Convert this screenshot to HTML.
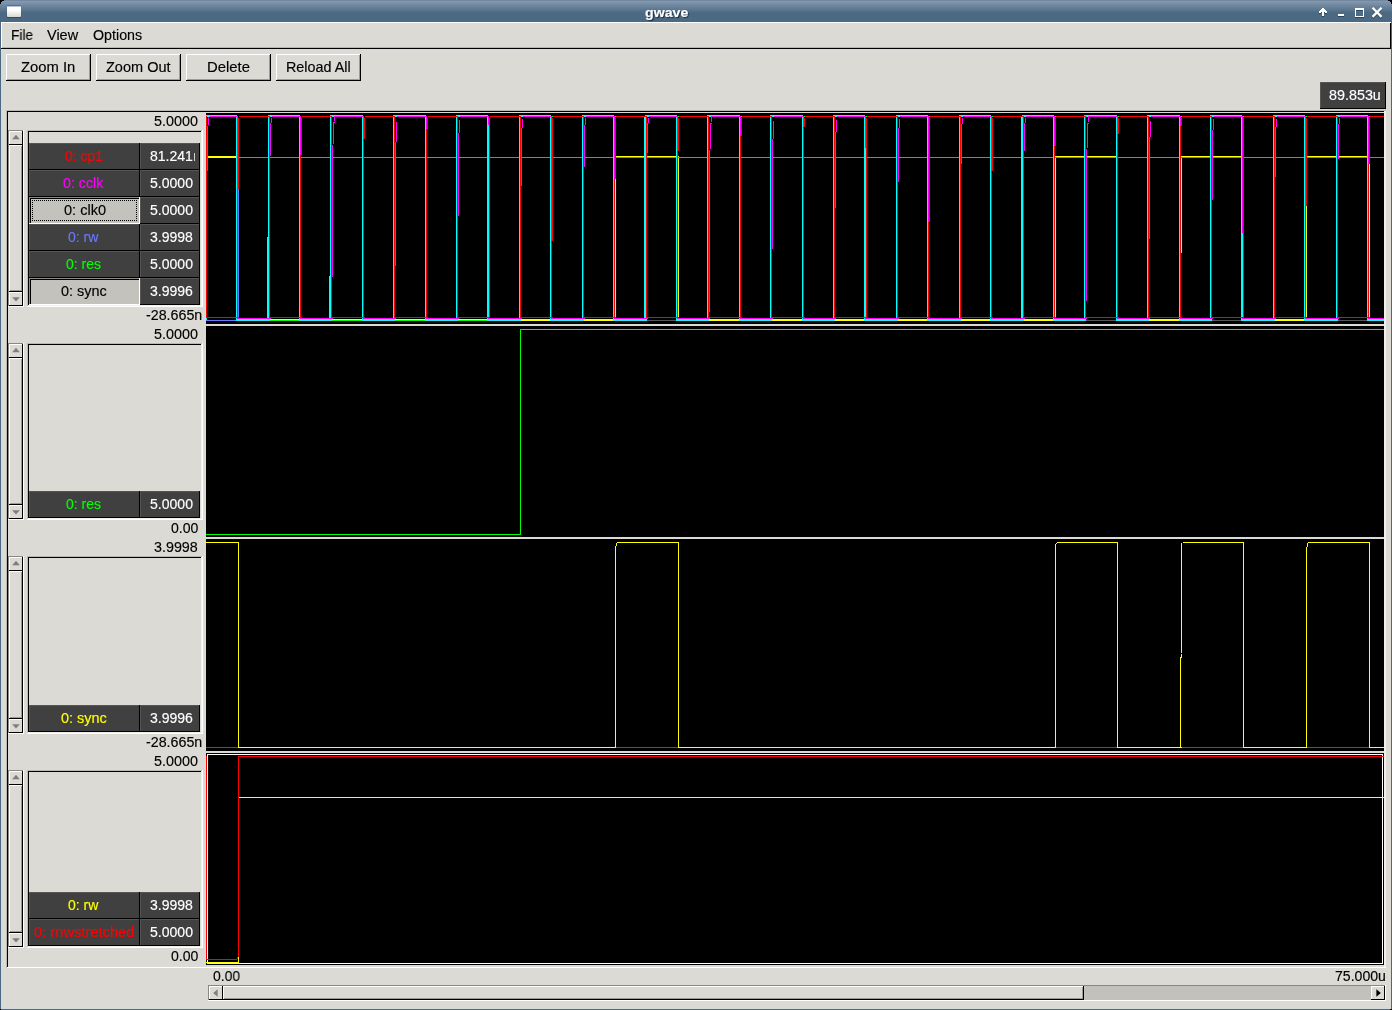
<!DOCTYPE html>
<html><head><meta charset="utf-8"><title>gwave</title>
<style>
html,body{margin:0;padding:0;}
body{width:1392px;height:1010px;background:#dcdad5;position:relative;overflow:hidden;font-family:"Liberation Sans",sans-serif;}
body>div,body>svg,body>span{position:absolute;}
.t{white-space:pre;line-height:16px;transform-origin:0 0;display:block;will-change:transform;-webkit-text-stroke:0.15px currentColor;}
</style></head><body>
<div style="left:0;top:0;width:1392px;height:22px;background:linear-gradient(#5d7690 0px,#869bb1 1px,#8096ad 2px,#4b6983 13px,#4b6983 22px);"></div>
<div style="left:0px;top:0px;width:4px;height:1px;background:#000;"></div>
<div style="left:0px;top:1px;width:2px;height:1px;background:#000;"></div>
<div style="left:0px;top:2px;width:1px;height:2px;background:#000;"></div>
<div style="left:1388px;top:0px;width:4px;height:1px;background:#000;"></div>
<div style="left:1390px;top:1px;width:2px;height:1px;background:#000;"></div>
<div style="left:1391px;top:2px;width:1px;height:2px;background:#000;"></div>
<div style="left:0px;top:22px;width:1px;height:988px;background:#4b6983;"></div>
<div style="left:1391px;top:22px;width:1px;height:988px;background:#4b6983;"></div>
<div style="left:0px;top:1009px;width:1392px;height:1px;background:#4b6983;"></div>
<div style="left:1390px;top:1009px;width:2px;height:1px;background:#000;"></div>
<div style="left:0px;top:1009px;width:1px;height:1px;background:#000;"></div>
<div style="left:7px;top:5px;width:14px;height:12px;background:linear-gradient(#3b62a8 0px,#5f82c0 1px,#fff 2px,#fff 5px,#d8d8d2 12px);border-radius:1px;box-shadow:0 1px 1px rgba(30,40,60,.5);"></div>
<div style="left:1px;top:22px;width:1390px;height:1px;background:#fff;"></div>
<div style="left:1px;top:22px;width:1px;height:26px;background:#fff;"></div>
<div style="left:1px;top:48px;width:1390px;height:1px;background:#000;"></div>
<div style="left:1390px;top:23px;width:1px;height:26px;background:#000;"></div>
<div style="left:2px;top:47px;width:1388px;height:1px;background:#b9b7b2;"></div>
<div style="left:6px;top:54px;width:85px;height:27px;background:#dcdad5;"></div>
<div style="left:6px;top:54px;width:84px;height:1px;background:#fff;"></div>
<div style="left:6px;top:54px;width:1px;height:26px;background:#fff;"></div>
<div style="left:6px;top:80px;width:85px;height:1px;background:#000;"></div>
<div style="left:90px;top:54px;width:1px;height:27px;background:#000;"></div>
<div style="left:7px;top:79px;width:83px;height:1px;background:#9d9b96;"></div>
<div style="left:89px;top:55px;width:1px;height:25px;background:#9d9b96;"></div>
<div style="left:96px;top:54px;width:85px;height:27px;background:#dcdad5;"></div>
<div style="left:96px;top:54px;width:84px;height:1px;background:#fff;"></div>
<div style="left:96px;top:54px;width:1px;height:26px;background:#fff;"></div>
<div style="left:96px;top:80px;width:85px;height:1px;background:#000;"></div>
<div style="left:180px;top:54px;width:1px;height:27px;background:#000;"></div>
<div style="left:97px;top:79px;width:83px;height:1px;background:#9d9b96;"></div>
<div style="left:179px;top:55px;width:1px;height:25px;background:#9d9b96;"></div>
<div style="left:186px;top:54px;width:85px;height:27px;background:#dcdad5;"></div>
<div style="left:186px;top:54px;width:84px;height:1px;background:#fff;"></div>
<div style="left:186px;top:54px;width:1px;height:26px;background:#fff;"></div>
<div style="left:186px;top:80px;width:85px;height:1px;background:#000;"></div>
<div style="left:270px;top:54px;width:1px;height:27px;background:#000;"></div>
<div style="left:187px;top:79px;width:83px;height:1px;background:#9d9b96;"></div>
<div style="left:269px;top:55px;width:1px;height:25px;background:#9d9b96;"></div>
<div style="left:276px;top:54px;width:85px;height:27px;background:#dcdad5;"></div>
<div style="left:276px;top:54px;width:84px;height:1px;background:#fff;"></div>
<div style="left:276px;top:54px;width:1px;height:26px;background:#fff;"></div>
<div style="left:276px;top:80px;width:85px;height:1px;background:#000;"></div>
<div style="left:360px;top:54px;width:1px;height:27px;background:#000;"></div>
<div style="left:277px;top:79px;width:83px;height:1px;background:#9d9b96;"></div>
<div style="left:359px;top:55px;width:1px;height:25px;background:#9d9b96;"></div>
<div style="left:1320px;top:82px;width:66px;height:27px;background:#404040;"></div>
<div style="left:1320px;top:108px;width:66px;height:1px;background:#000;"></div>
<div style="left:1385px;top:82px;width:1px;height:27px;background:#000;"></div>
<div style="left:1320px;top:82px;width:65px;height:1px;background:#555555;"></div>
<div style="left:1320px;top:82px;width:1px;height:26px;background:#555555;"></div>
<div style="left:6px;top:110px;width:1380px;height:1px;background:#bab8b3;"></div>
<div style="left:6px;top:110px;width:1px;height:858px;background:#bab8b3;"></div>
<div style="left:7px;top:111px;width:1377px;height:1px;background:#000;"></div>
<div style="left:7px;top:111px;width:1px;height:856px;background:#000;"></div>
<div style="left:1384px;top:111px;width:2px;height:857px;background:#f1efeb;"></div>
<div style="left:7px;top:967px;width:1379px;height:1px;background:#fff;"></div>
<div style="left:206px;top:113px;width:1178px;height:211px;background:#000;"></div>
<div style="left:206px;top:326px;width:1178px;height:211px;background:#000;"></div>
<div style="left:206px;top:539px;width:1178px;height:212px;background:#000;"></div>
<div style="left:206px;top:753px;width:1178px;height:212px;background:#000;"></div>
<div style="left:8px;top:130px;width:16px;height:177px;background:#dcdad5;"></div>
<div style="left:8px;top:130px;width:15px;height:1px;background:#8a8883;"></div>
<div style="left:8px;top:130px;width:1px;height:176px;background:#8a8883;"></div>
<div style="left:8px;top:306px;width:16px;height:1px;background:#fff;"></div>
<div style="left:23px;top:130px;width:1px;height:177px;background:#fff;"></div>
<div style="left:9px;top:131px;width:14px;height:14px;background:#dcdad5;"></div>
<div style="left:9px;top:131px;width:14px;height:1px;background:#fff;"></div>
<div style="left:9px;top:131px;width:1px;height:14px;background:#fff;"></div>
<div style="left:9px;top:144px;width:14px;height:1px;background:#000;"></div>
<div style="left:22px;top:131px;width:1px;height:14px;background:#000;"></div>
<svg style="left:9px;top:131px" width="14" height="14"><polygon points="3.2,8.2 10.8,8.2 7,3.8" fill="#807e7a"/></svg>
<div style="left:9px;top:145px;width:14px;height:147px;background:#dcdad5;"></div>
<div style="left:9px;top:145px;width:14px;height:1px;background:#fff;"></div>
<div style="left:9px;top:145px;width:1px;height:147px;background:#fff;"></div>
<div style="left:10px;top:290px;width:12px;height:1px;background:#9d9b96;"></div>
<div style="left:21px;top:146px;width:1px;height:145px;background:#9d9b96;"></div>
<div style="left:9px;top:291px;width:14px;height:1px;background:#000;"></div>
<div style="left:22px;top:145px;width:1px;height:147px;background:#000;"></div>
<div style="left:9px;top:292px;width:14px;height:14px;background:#dcdad5;"></div>
<div style="left:9px;top:292px;width:14px;height:1px;background:#fff;"></div>
<div style="left:9px;top:292px;width:1px;height:14px;background:#fff;"></div>
<div style="left:9px;top:305px;width:14px;height:1px;background:#000;"></div>
<div style="left:22px;top:292px;width:1px;height:14px;background:#000;"></div>
<svg style="left:9px;top:292px" width="14" height="14"><polygon points="3.2,5.2 10.8,5.2 7,9.6" fill="#807e7a"/></svg>
<div style="left:27px;top:130px;width:175px;height:1px;background:#bab8b3;"></div>
<div style="left:27px;top:130px;width:1px;height:176px;background:#bab8b3;"></div>
<div style="left:28px;top:131px;width:173px;height:1px;background:#000;"></div>
<div style="left:28px;top:131px;width:1px;height:174px;background:#000;"></div>
<div style="left:28px;top:305px;width:174px;height:1px;background:#f1efeb;"></div>
<div style="left:201px;top:131px;width:1px;height:175px;background:#f1efeb;"></div>
<div style="left:27px;top:306px;width:176px;height:1px;background:#fff;"></div>
<div style="left:202px;top:130px;width:1px;height:177px;background:#fff;"></div>
<div style="left:29px;top:143px;width:111px;height:27px;background:#404040;"></div>
<div style="left:29px;top:143px;width:110px;height:1px;background:#555555;"></div>
<div style="left:29px;top:143px;width:1px;height:26px;background:#555555;"></div>
<div style="left:29px;top:169px;width:111px;height:1px;background:#000;"></div>
<div style="left:139px;top:143px;width:1px;height:27px;background:#000;"></div>
<div style="left:140px;top:143px;width:60px;height:27px;background:#404040;"></div>
<div style="left:140px;top:143px;width:59px;height:1px;background:#555555;"></div>
<div style="left:140px;top:143px;width:1px;height:26px;background:#555555;"></div>
<div style="left:140px;top:169px;width:60px;height:1px;background:#000;"></div>
<div style="left:199px;top:143px;width:1px;height:27px;background:#000;"></div>
<div style="left:194px;top:153px;width:1px;height:8px;background:#d0d0d0;"></div>
<div style="left:29px;top:170px;width:111px;height:27px;background:#404040;"></div>
<div style="left:29px;top:170px;width:110px;height:1px;background:#555555;"></div>
<div style="left:29px;top:170px;width:1px;height:26px;background:#555555;"></div>
<div style="left:29px;top:196px;width:111px;height:1px;background:#000;"></div>
<div style="left:139px;top:170px;width:1px;height:27px;background:#000;"></div>
<div style="left:140px;top:170px;width:60px;height:27px;background:#404040;"></div>
<div style="left:140px;top:170px;width:59px;height:1px;background:#555555;"></div>
<div style="left:140px;top:170px;width:1px;height:26px;background:#555555;"></div>
<div style="left:140px;top:196px;width:60px;height:1px;background:#000;"></div>
<div style="left:199px;top:170px;width:1px;height:27px;background:#000;"></div>
<div style="left:29px;top:197px;width:111px;height:27px;background:#c4c2bc;"></div>
<div style="left:29px;top:197px;width:111px;height:1px;background:#8f8d88;"></div>
<div style="left:29px;top:197px;width:1px;height:27px;background:#8f8d88;"></div>
<div style="left:30px;top:198px;width:109px;height:1px;background:#000;"></div>
<div style="left:30px;top:198px;width:1px;height:25px;background:#000;"></div>
<div style="left:29px;top:223px;width:111px;height:1px;background:#fff;"></div>
<div style="left:139px;top:197px;width:1px;height:27px;background:#fff;"></div>
<div style="left:32px;top:200px;width:103px;height:19px;border:1px dotted #000;"></div>
<div style="left:140px;top:197px;width:60px;height:27px;background:#404040;"></div>
<div style="left:140px;top:197px;width:59px;height:1px;background:#555555;"></div>
<div style="left:140px;top:197px;width:1px;height:26px;background:#555555;"></div>
<div style="left:140px;top:223px;width:60px;height:1px;background:#000;"></div>
<div style="left:199px;top:197px;width:1px;height:27px;background:#000;"></div>
<div style="left:29px;top:224px;width:111px;height:27px;background:#404040;"></div>
<div style="left:29px;top:224px;width:110px;height:1px;background:#555555;"></div>
<div style="left:29px;top:224px;width:1px;height:26px;background:#555555;"></div>
<div style="left:29px;top:250px;width:111px;height:1px;background:#000;"></div>
<div style="left:139px;top:224px;width:1px;height:27px;background:#000;"></div>
<div style="left:140px;top:224px;width:60px;height:27px;background:#404040;"></div>
<div style="left:140px;top:224px;width:59px;height:1px;background:#555555;"></div>
<div style="left:140px;top:224px;width:1px;height:26px;background:#555555;"></div>
<div style="left:140px;top:250px;width:60px;height:1px;background:#000;"></div>
<div style="left:199px;top:224px;width:1px;height:27px;background:#000;"></div>
<div style="left:29px;top:251px;width:111px;height:27px;background:#404040;"></div>
<div style="left:29px;top:251px;width:110px;height:1px;background:#555555;"></div>
<div style="left:29px;top:251px;width:1px;height:26px;background:#555555;"></div>
<div style="left:29px;top:277px;width:111px;height:1px;background:#000;"></div>
<div style="left:139px;top:251px;width:1px;height:27px;background:#000;"></div>
<div style="left:140px;top:251px;width:60px;height:27px;background:#404040;"></div>
<div style="left:140px;top:251px;width:59px;height:1px;background:#555555;"></div>
<div style="left:140px;top:251px;width:1px;height:26px;background:#555555;"></div>
<div style="left:140px;top:277px;width:60px;height:1px;background:#000;"></div>
<div style="left:199px;top:251px;width:1px;height:27px;background:#000;"></div>
<div style="left:29px;top:278px;width:111px;height:27px;background:#c4c2bc;"></div>
<div style="left:29px;top:278px;width:111px;height:1px;background:#8f8d88;"></div>
<div style="left:29px;top:278px;width:1px;height:27px;background:#8f8d88;"></div>
<div style="left:30px;top:279px;width:109px;height:1px;background:#000;"></div>
<div style="left:30px;top:279px;width:1px;height:25px;background:#000;"></div>
<div style="left:29px;top:304px;width:111px;height:1px;background:#fff;"></div>
<div style="left:139px;top:278px;width:1px;height:27px;background:#fff;"></div>
<div style="left:140px;top:278px;width:60px;height:27px;background:#404040;"></div>
<div style="left:140px;top:278px;width:59px;height:1px;background:#555555;"></div>
<div style="left:140px;top:278px;width:1px;height:26px;background:#555555;"></div>
<div style="left:140px;top:304px;width:60px;height:1px;background:#000;"></div>
<div style="left:199px;top:278px;width:1px;height:27px;background:#000;"></div>
<div style="left:8px;top:343px;width:16px;height:177px;background:#dcdad5;"></div>
<div style="left:8px;top:343px;width:15px;height:1px;background:#8a8883;"></div>
<div style="left:8px;top:343px;width:1px;height:176px;background:#8a8883;"></div>
<div style="left:8px;top:519px;width:16px;height:1px;background:#fff;"></div>
<div style="left:23px;top:343px;width:1px;height:177px;background:#fff;"></div>
<div style="left:9px;top:344px;width:14px;height:14px;background:#dcdad5;"></div>
<div style="left:9px;top:344px;width:14px;height:1px;background:#fff;"></div>
<div style="left:9px;top:344px;width:1px;height:14px;background:#fff;"></div>
<div style="left:9px;top:357px;width:14px;height:1px;background:#000;"></div>
<div style="left:22px;top:344px;width:1px;height:14px;background:#000;"></div>
<svg style="left:9px;top:344px" width="14" height="14"><polygon points="3.2,8.2 10.8,8.2 7,3.8" fill="#807e7a"/></svg>
<div style="left:9px;top:358px;width:14px;height:147px;background:#dcdad5;"></div>
<div style="left:9px;top:358px;width:14px;height:1px;background:#fff;"></div>
<div style="left:9px;top:358px;width:1px;height:147px;background:#fff;"></div>
<div style="left:10px;top:503px;width:12px;height:1px;background:#9d9b96;"></div>
<div style="left:21px;top:359px;width:1px;height:145px;background:#9d9b96;"></div>
<div style="left:9px;top:504px;width:14px;height:1px;background:#000;"></div>
<div style="left:22px;top:358px;width:1px;height:147px;background:#000;"></div>
<div style="left:9px;top:505px;width:14px;height:14px;background:#dcdad5;"></div>
<div style="left:9px;top:505px;width:14px;height:1px;background:#fff;"></div>
<div style="left:9px;top:505px;width:1px;height:14px;background:#fff;"></div>
<div style="left:9px;top:518px;width:14px;height:1px;background:#000;"></div>
<div style="left:22px;top:505px;width:1px;height:14px;background:#000;"></div>
<svg style="left:9px;top:505px" width="14" height="14"><polygon points="3.2,5.2 10.8,5.2 7,9.6" fill="#807e7a"/></svg>
<div style="left:27px;top:343px;width:175px;height:1px;background:#bab8b3;"></div>
<div style="left:27px;top:343px;width:1px;height:176px;background:#bab8b3;"></div>
<div style="left:28px;top:344px;width:173px;height:1px;background:#000;"></div>
<div style="left:28px;top:344px;width:1px;height:174px;background:#000;"></div>
<div style="left:28px;top:518px;width:174px;height:1px;background:#f1efeb;"></div>
<div style="left:201px;top:344px;width:1px;height:175px;background:#f1efeb;"></div>
<div style="left:27px;top:519px;width:176px;height:1px;background:#fff;"></div>
<div style="left:202px;top:343px;width:1px;height:177px;background:#fff;"></div>
<div style="left:29px;top:491px;width:111px;height:27px;background:#404040;"></div>
<div style="left:29px;top:491px;width:110px;height:1px;background:#555555;"></div>
<div style="left:29px;top:491px;width:1px;height:26px;background:#555555;"></div>
<div style="left:29px;top:517px;width:111px;height:1px;background:#000;"></div>
<div style="left:139px;top:491px;width:1px;height:27px;background:#000;"></div>
<div style="left:140px;top:491px;width:60px;height:27px;background:#404040;"></div>
<div style="left:140px;top:491px;width:59px;height:1px;background:#555555;"></div>
<div style="left:140px;top:491px;width:1px;height:26px;background:#555555;"></div>
<div style="left:140px;top:517px;width:60px;height:1px;background:#000;"></div>
<div style="left:199px;top:491px;width:1px;height:27px;background:#000;"></div>
<div style="left:8px;top:556px;width:16px;height:178px;background:#dcdad5;"></div>
<div style="left:8px;top:556px;width:15px;height:1px;background:#8a8883;"></div>
<div style="left:8px;top:556px;width:1px;height:177px;background:#8a8883;"></div>
<div style="left:8px;top:733px;width:16px;height:1px;background:#fff;"></div>
<div style="left:23px;top:556px;width:1px;height:178px;background:#fff;"></div>
<div style="left:9px;top:557px;width:14px;height:14px;background:#dcdad5;"></div>
<div style="left:9px;top:557px;width:14px;height:1px;background:#fff;"></div>
<div style="left:9px;top:557px;width:1px;height:14px;background:#fff;"></div>
<div style="left:9px;top:570px;width:14px;height:1px;background:#000;"></div>
<div style="left:22px;top:557px;width:1px;height:14px;background:#000;"></div>
<svg style="left:9px;top:557px" width="14" height="14"><polygon points="3.2,8.2 10.8,8.2 7,3.8" fill="#807e7a"/></svg>
<div style="left:9px;top:571px;width:14px;height:148px;background:#dcdad5;"></div>
<div style="left:9px;top:571px;width:14px;height:1px;background:#fff;"></div>
<div style="left:9px;top:571px;width:1px;height:148px;background:#fff;"></div>
<div style="left:10px;top:717px;width:12px;height:1px;background:#9d9b96;"></div>
<div style="left:21px;top:572px;width:1px;height:146px;background:#9d9b96;"></div>
<div style="left:9px;top:718px;width:14px;height:1px;background:#000;"></div>
<div style="left:22px;top:571px;width:1px;height:148px;background:#000;"></div>
<div style="left:9px;top:719px;width:14px;height:14px;background:#dcdad5;"></div>
<div style="left:9px;top:719px;width:14px;height:1px;background:#fff;"></div>
<div style="left:9px;top:719px;width:1px;height:14px;background:#fff;"></div>
<div style="left:9px;top:732px;width:14px;height:1px;background:#000;"></div>
<div style="left:22px;top:719px;width:1px;height:14px;background:#000;"></div>
<svg style="left:9px;top:719px" width="14" height="14"><polygon points="3.2,5.2 10.8,5.2 7,9.6" fill="#807e7a"/></svg>
<div style="left:27px;top:556px;width:175px;height:1px;background:#bab8b3;"></div>
<div style="left:27px;top:556px;width:1px;height:177px;background:#bab8b3;"></div>
<div style="left:28px;top:557px;width:173px;height:1px;background:#000;"></div>
<div style="left:28px;top:557px;width:1px;height:175px;background:#000;"></div>
<div style="left:28px;top:732px;width:174px;height:1px;background:#f1efeb;"></div>
<div style="left:201px;top:557px;width:1px;height:176px;background:#f1efeb;"></div>
<div style="left:27px;top:733px;width:176px;height:1px;background:#fff;"></div>
<div style="left:202px;top:556px;width:1px;height:178px;background:#fff;"></div>
<div style="left:29px;top:705px;width:111px;height:27px;background:#404040;"></div>
<div style="left:29px;top:705px;width:110px;height:1px;background:#555555;"></div>
<div style="left:29px;top:705px;width:1px;height:26px;background:#555555;"></div>
<div style="left:29px;top:731px;width:111px;height:1px;background:#000;"></div>
<div style="left:139px;top:705px;width:1px;height:27px;background:#000;"></div>
<div style="left:140px;top:705px;width:60px;height:27px;background:#404040;"></div>
<div style="left:140px;top:705px;width:59px;height:1px;background:#555555;"></div>
<div style="left:140px;top:705px;width:1px;height:26px;background:#555555;"></div>
<div style="left:140px;top:731px;width:60px;height:1px;background:#000;"></div>
<div style="left:199px;top:705px;width:1px;height:27px;background:#000;"></div>
<div style="left:8px;top:770px;width:16px;height:178px;background:#dcdad5;"></div>
<div style="left:8px;top:770px;width:15px;height:1px;background:#8a8883;"></div>
<div style="left:8px;top:770px;width:1px;height:177px;background:#8a8883;"></div>
<div style="left:8px;top:947px;width:16px;height:1px;background:#fff;"></div>
<div style="left:23px;top:770px;width:1px;height:178px;background:#fff;"></div>
<div style="left:9px;top:771px;width:14px;height:14px;background:#dcdad5;"></div>
<div style="left:9px;top:771px;width:14px;height:1px;background:#fff;"></div>
<div style="left:9px;top:771px;width:1px;height:14px;background:#fff;"></div>
<div style="left:9px;top:784px;width:14px;height:1px;background:#000;"></div>
<div style="left:22px;top:771px;width:1px;height:14px;background:#000;"></div>
<svg style="left:9px;top:771px" width="14" height="14"><polygon points="3.2,8.2 10.8,8.2 7,3.8" fill="#807e7a"/></svg>
<div style="left:9px;top:785px;width:14px;height:148px;background:#dcdad5;"></div>
<div style="left:9px;top:785px;width:14px;height:1px;background:#fff;"></div>
<div style="left:9px;top:785px;width:1px;height:148px;background:#fff;"></div>
<div style="left:10px;top:931px;width:12px;height:1px;background:#9d9b96;"></div>
<div style="left:21px;top:786px;width:1px;height:146px;background:#9d9b96;"></div>
<div style="left:9px;top:932px;width:14px;height:1px;background:#000;"></div>
<div style="left:22px;top:785px;width:1px;height:148px;background:#000;"></div>
<div style="left:9px;top:933px;width:14px;height:14px;background:#dcdad5;"></div>
<div style="left:9px;top:933px;width:14px;height:1px;background:#fff;"></div>
<div style="left:9px;top:933px;width:1px;height:14px;background:#fff;"></div>
<div style="left:9px;top:946px;width:14px;height:1px;background:#000;"></div>
<div style="left:22px;top:933px;width:1px;height:14px;background:#000;"></div>
<svg style="left:9px;top:933px" width="14" height="14"><polygon points="3.2,5.2 10.8,5.2 7,9.6" fill="#807e7a"/></svg>
<div style="left:27px;top:770px;width:175px;height:1px;background:#bab8b3;"></div>
<div style="left:27px;top:770px;width:1px;height:177px;background:#bab8b3;"></div>
<div style="left:28px;top:771px;width:173px;height:1px;background:#000;"></div>
<div style="left:28px;top:771px;width:1px;height:175px;background:#000;"></div>
<div style="left:28px;top:946px;width:174px;height:1px;background:#f1efeb;"></div>
<div style="left:201px;top:771px;width:1px;height:176px;background:#f1efeb;"></div>
<div style="left:27px;top:947px;width:176px;height:1px;background:#fff;"></div>
<div style="left:202px;top:770px;width:1px;height:178px;background:#fff;"></div>
<div style="left:29px;top:892px;width:111px;height:27px;background:#404040;"></div>
<div style="left:29px;top:892px;width:110px;height:1px;background:#555555;"></div>
<div style="left:29px;top:892px;width:1px;height:26px;background:#555555;"></div>
<div style="left:29px;top:918px;width:111px;height:1px;background:#000;"></div>
<div style="left:139px;top:892px;width:1px;height:27px;background:#000;"></div>
<div style="left:140px;top:892px;width:60px;height:27px;background:#404040;"></div>
<div style="left:140px;top:892px;width:59px;height:1px;background:#555555;"></div>
<div style="left:140px;top:892px;width:1px;height:26px;background:#555555;"></div>
<div style="left:140px;top:918px;width:60px;height:1px;background:#000;"></div>
<div style="left:199px;top:892px;width:1px;height:27px;background:#000;"></div>
<div style="left:29px;top:919px;width:111px;height:27px;background:#404040;"></div>
<div style="left:29px;top:919px;width:110px;height:1px;background:#555555;"></div>
<div style="left:29px;top:919px;width:1px;height:26px;background:#555555;"></div>
<div style="left:29px;top:945px;width:111px;height:1px;background:#000;"></div>
<div style="left:139px;top:919px;width:1px;height:27px;background:#000;"></div>
<div style="left:140px;top:919px;width:60px;height:27px;background:#404040;"></div>
<div style="left:140px;top:919px;width:59px;height:1px;background:#555555;"></div>
<div style="left:140px;top:919px;width:1px;height:26px;background:#555555;"></div>
<div style="left:140px;top:945px;width:60px;height:1px;background:#000;"></div>
<div style="left:199px;top:919px;width:1px;height:27px;background:#000;"></div>
<div style="left:208px;top:985px;width:1178px;height:16px;background:#c3c1bb;"></div>
<div style="left:208px;top:985px;width:1177px;height:1px;background:#8a8883;"></div>
<div style="left:208px;top:985px;width:1px;height:15px;background:#8a8883;"></div>
<div style="left:208px;top:1000px;width:1178px;height:1px;background:#fff;"></div>
<div style="left:1385px;top:985px;width:1px;height:16px;background:#fff;"></div>
<div style="left:209px;top:986px;width:14px;height:14px;background:#dcdad5;"></div>
<div style="left:209px;top:986px;width:14px;height:1px;background:#fff;"></div>
<div style="left:209px;top:986px;width:1px;height:14px;background:#fff;"></div>
<div style="left:209px;top:999px;width:14px;height:1px;background:#000;"></div>
<div style="left:222px;top:986px;width:1px;height:14px;background:#000;"></div>
<svg style="left:209px;top:986px" width="14" height="14"><polygon points="8.6,3.2 8.6,10.8 4.2,7" fill="#807e7a"/></svg>
<div style="left:223px;top:986px;width:861px;height:14px;background:#dcdad5;"></div>
<div style="left:223px;top:986px;width:861px;height:1px;background:#fff;"></div>
<div style="left:223px;top:986px;width:1px;height:14px;background:#fff;"></div>
<div style="left:224px;top:998px;width:859px;height:1px;background:#9d9b96;"></div>
<div style="left:1082px;top:987px;width:1px;height:12px;background:#9d9b96;"></div>
<div style="left:223px;top:999px;width:861px;height:1px;background:#000;"></div>
<div style="left:1083px;top:986px;width:1px;height:14px;background:#000;"></div>
<div style="left:1371px;top:986px;width:14px;height:14px;background:#dcdad5;"></div>
<div style="left:1371px;top:986px;width:14px;height:1px;background:#fff;"></div>
<div style="left:1371px;top:986px;width:1px;height:14px;background:#fff;"></div>
<div style="left:1371px;top:999px;width:14px;height:1px;background:#000;"></div>
<div style="left:1384px;top:986px;width:1px;height:14px;background:#000;"></div>
<svg style="left:1371px;top:986px" width="14" height="14"><polygon points="5.4,3.2 5.4,10.8 9.8,7" fill="#000"/></svg>
<svg style="left:0;top:0" width="1392" height="1010" shape-rendering="crispEdges">
<rect x="206" y="320" width="1178" height="1" fill="#555555"/>
<rect x="206" y="156" width="32" height="2" fill="#ffff00"/>
<rect x="238" y="319" width="377" height="2" fill="#ffff00"/>
<rect x="615" y="156" width="63" height="2" fill="#ffff00"/>
<rect x="678" y="319" width="377" height="2" fill="#ffff00"/>
<rect x="1055" y="156" width="62" height="2" fill="#ffff00"/>
<rect x="1117" y="319" width="64" height="2" fill="#ffff00"/>
<rect x="1181" y="156" width="62" height="2" fill="#ffff00"/>
<rect x="1243" y="319" width="63" height="2" fill="#ffff00"/>
<rect x="1306" y="156" width="63" height="2" fill="#ffff00"/>
<rect x="1369" y="319" width="15" height="2" fill="#ffff00"/>
<rect x="237" y="156" width="2" height="165" fill="#ffff00"/>
<rect x="614" y="156" width="2" height="165" fill="#ffff00"/>
<rect x="677" y="156" width="2" height="165" fill="#ffff00"/>
<rect x="1054" y="156" width="2" height="165" fill="#ffff00"/>
<rect x="1116" y="156" width="2" height="165" fill="#ffff00"/>
<rect x="1180" y="156" width="2" height="97" fill="#ffff00"/>
<rect x="1242" y="156" width="2" height="165" fill="#ffff00"/>
<rect x="1305" y="156" width="2" height="165" fill="#ffff00"/>
<rect x="1368" y="156" width="2" height="165" fill="#ffff00"/>
<rect x="206" y="320" width="314" height="1" fill="#00ff00"/>
<rect x="520" y="116" width="1" height="205" fill="#00ff00"/>
<rect x="520" y="116" width="864" height="1" fill="#00ff00"/>
<rect x="206" y="320" width="32" height="1" fill="#6678ff"/>
<rect x="238" y="157" width="1" height="164" fill="#6678ff"/>
<rect x="238" y="157" width="1146" height="1" fill="#6678ff"/>
<rect x="206" y="115" width="31" height="2" fill="#00ffff"/>
<rect x="236" y="319" width="33" height="2" fill="#00ffff"/>
<rect x="236" y="115" width="1" height="206" fill="#00ffff"/>
<rect x="237" y="116" width="1" height="205" fill="#00ffff"/>
<rect x="268" y="115" width="32" height="2" fill="#00ffff"/>
<rect x="268" y="115" width="1" height="206" fill="#00ffff"/>
<rect x="269" y="116" width="1" height="205" fill="#00ffff"/>
<rect x="267" y="237" width="1" height="84" fill="#00ffff"/>
<rect x="299" y="319" width="32" height="2" fill="#00ffff"/>
<rect x="299" y="115" width="1" height="206" fill="#00ffff"/>
<rect x="300" y="116" width="1" height="205" fill="#00ffff"/>
<rect x="330" y="115" width="33" height="2" fill="#00ffff"/>
<rect x="330" y="115" width="1" height="206" fill="#00ffff"/>
<rect x="331" y="116" width="1" height="205" fill="#00ffff"/>
<rect x="329" y="276" width="1" height="45" fill="#00ffff"/>
<rect x="362" y="319" width="32" height="2" fill="#00ffff"/>
<rect x="362" y="115" width="1" height="206" fill="#00ffff"/>
<rect x="363" y="116" width="1" height="205" fill="#00ffff"/>
<rect x="393" y="115" width="33" height="2" fill="#00ffff"/>
<rect x="393" y="115" width="1" height="206" fill="#00ffff"/>
<rect x="394" y="116" width="1" height="205" fill="#00ffff"/>
<rect x="425" y="319" width="32" height="2" fill="#00ffff"/>
<rect x="425" y="115" width="1" height="206" fill="#00ffff"/>
<rect x="426" y="116" width="1" height="205" fill="#00ffff"/>
<rect x="456" y="115" width="32" height="2" fill="#00ffff"/>
<rect x="456" y="115" width="1" height="206" fill="#00ffff"/>
<rect x="457" y="116" width="1" height="205" fill="#00ffff"/>
<rect x="487" y="319" width="33" height="2" fill="#00ffff"/>
<rect x="487" y="115" width="1" height="206" fill="#00ffff"/>
<rect x="488" y="116" width="1" height="205" fill="#00ffff"/>
<rect x="519" y="115" width="32" height="2" fill="#00ffff"/>
<rect x="519" y="115" width="1" height="206" fill="#00ffff"/>
<rect x="520" y="116" width="1" height="205" fill="#00ffff"/>
<rect x="550" y="319" width="33" height="2" fill="#00ffff"/>
<rect x="550" y="115" width="1" height="206" fill="#00ffff"/>
<rect x="551" y="116" width="1" height="205" fill="#00ffff"/>
<rect x="582" y="115" width="32" height="2" fill="#00ffff"/>
<rect x="582" y="115" width="1" height="206" fill="#00ffff"/>
<rect x="583" y="116" width="1" height="205" fill="#00ffff"/>
<rect x="613" y="319" width="33" height="2" fill="#00ffff"/>
<rect x="613" y="115" width="1" height="206" fill="#00ffff"/>
<rect x="614" y="116" width="1" height="205" fill="#00ffff"/>
<rect x="645" y="115" width="32" height="2" fill="#00ffff"/>
<rect x="645" y="115" width="1" height="206" fill="#00ffff"/>
<rect x="646" y="116" width="1" height="205" fill="#00ffff"/>
<rect x="644" y="116" width="1" height="205" fill="#00ffff"/>
<rect x="676" y="319" width="32" height="2" fill="#00ffff"/>
<rect x="676" y="115" width="1" height="206" fill="#00ffff"/>
<rect x="677" y="116" width="1" height="205" fill="#00ffff"/>
<rect x="707" y="115" width="33" height="2" fill="#00ffff"/>
<rect x="707" y="115" width="1" height="206" fill="#00ffff"/>
<rect x="708" y="116" width="1" height="205" fill="#00ffff"/>
<rect x="739" y="319" width="32" height="2" fill="#00ffff"/>
<rect x="739" y="115" width="1" height="206" fill="#00ffff"/>
<rect x="740" y="116" width="1" height="205" fill="#00ffff"/>
<rect x="770" y="115" width="33" height="2" fill="#00ffff"/>
<rect x="770" y="115" width="1" height="206" fill="#00ffff"/>
<rect x="771" y="116" width="1" height="205" fill="#00ffff"/>
<rect x="802" y="319" width="32" height="2" fill="#00ffff"/>
<rect x="802" y="115" width="1" height="206" fill="#00ffff"/>
<rect x="803" y="116" width="1" height="205" fill="#00ffff"/>
<rect x="833" y="115" width="32" height="2" fill="#00ffff"/>
<rect x="833" y="115" width="1" height="206" fill="#00ffff"/>
<rect x="834" y="116" width="1" height="205" fill="#00ffff"/>
<rect x="864" y="319" width="33" height="2" fill="#00ffff"/>
<rect x="864" y="115" width="1" height="206" fill="#00ffff"/>
<rect x="865" y="116" width="1" height="205" fill="#00ffff"/>
<rect x="896" y="115" width="32" height="2" fill="#00ffff"/>
<rect x="896" y="115" width="1" height="206" fill="#00ffff"/>
<rect x="897" y="116" width="1" height="205" fill="#00ffff"/>
<rect x="927" y="319" width="33" height="2" fill="#00ffff"/>
<rect x="927" y="115" width="1" height="206" fill="#00ffff"/>
<rect x="928" y="116" width="1" height="205" fill="#00ffff"/>
<rect x="959" y="115" width="32" height="2" fill="#00ffff"/>
<rect x="959" y="115" width="1" height="206" fill="#00ffff"/>
<rect x="960" y="116" width="1" height="205" fill="#00ffff"/>
<rect x="990" y="319" width="33" height="2" fill="#00ffff"/>
<rect x="990" y="115" width="1" height="206" fill="#00ffff"/>
<rect x="991" y="116" width="1" height="205" fill="#00ffff"/>
<rect x="1022" y="115" width="32" height="2" fill="#00ffff"/>
<rect x="1022" y="115" width="1" height="206" fill="#00ffff"/>
<rect x="1023" y="116" width="1" height="205" fill="#00ffff"/>
<rect x="1021" y="116" width="1" height="205" fill="#00ffff"/>
<rect x="1053" y="319" width="32" height="2" fill="#00ffff"/>
<rect x="1053" y="115" width="1" height="206" fill="#00ffff"/>
<rect x="1054" y="116" width="1" height="205" fill="#00ffff"/>
<rect x="1084" y="115" width="33" height="2" fill="#00ffff"/>
<rect x="1084" y="115" width="1" height="206" fill="#00ffff"/>
<rect x="1085" y="116" width="1" height="205" fill="#00ffff"/>
<rect x="1116" y="319" width="32" height="2" fill="#00ffff"/>
<rect x="1116" y="115" width="1" height="206" fill="#00ffff"/>
<rect x="1117" y="116" width="1" height="205" fill="#00ffff"/>
<rect x="1147" y="115" width="33" height="2" fill="#00ffff"/>
<rect x="1147" y="115" width="1" height="206" fill="#00ffff"/>
<rect x="1148" y="116" width="1" height="205" fill="#00ffff"/>
<rect x="1179" y="319" width="32" height="2" fill="#00ffff"/>
<rect x="1179" y="115" width="1" height="206" fill="#00ffff"/>
<rect x="1180" y="116" width="1" height="205" fill="#00ffff"/>
<rect x="1210" y="115" width="32" height="2" fill="#00ffff"/>
<rect x="1210" y="115" width="1" height="206" fill="#00ffff"/>
<rect x="1211" y="116" width="1" height="205" fill="#00ffff"/>
<rect x="1241" y="319" width="33" height="2" fill="#00ffff"/>
<rect x="1241" y="115" width="1" height="206" fill="#00ffff"/>
<rect x="1242" y="116" width="1" height="205" fill="#00ffff"/>
<rect x="1273" y="115" width="32" height="2" fill="#00ffff"/>
<rect x="1273" y="115" width="1" height="206" fill="#00ffff"/>
<rect x="1274" y="116" width="1" height="205" fill="#00ffff"/>
<rect x="1304" y="319" width="33" height="2" fill="#00ffff"/>
<rect x="1304" y="115" width="1" height="206" fill="#00ffff"/>
<rect x="1305" y="116" width="1" height="205" fill="#00ffff"/>
<rect x="1336" y="115" width="32" height="2" fill="#00ffff"/>
<rect x="1336" y="115" width="1" height="206" fill="#00ffff"/>
<rect x="1337" y="116" width="1" height="205" fill="#00ffff"/>
<rect x="1367" y="319" width="17" height="2" fill="#00ffff"/>
<rect x="1367" y="115" width="1" height="206" fill="#00ffff"/>
<rect x="1368" y="116" width="1" height="205" fill="#00ffff"/>
<rect x="210" y="116" width="28" height="1" fill="#ff00ff"/>
<rect x="208" y="117" width="1" height="8" fill="#ff00ff"/>
<rect x="207" y="126" width="1" height="45" fill="#ff00ff"/>
<rect x="237" y="116" width="1" height="73" fill="#ff00ff"/>
<rect x="237" y="318" width="34" height="1" fill="#ff00ff"/>
<rect x="272" y="116" width="29" height="1" fill="#ff00ff"/>
<rect x="271" y="118" width="1" height="5" fill="#ff00ff"/>
<rect x="270" y="124" width="1" height="32" fill="#ff00ff"/>
<rect x="270" y="123" width="1" height="1" fill="#ff00ff"/>
<rect x="300" y="116" width="1" height="39" fill="#ff00ff"/>
<rect x="300" y="318" width="33" height="1" fill="#ff00ff"/>
<rect x="334" y="116" width="30" height="1" fill="#ff00ff"/>
<rect x="333" y="122" width="1" height="22" fill="#ff00ff"/>
<rect x="332" y="145" width="1" height="132" fill="#ff00ff"/>
<rect x="334" y="117" width="1" height="4" fill="#ff00ff"/>
<rect x="334" y="122" width="1" height="1" fill="#ff00ff"/>
<rect x="363" y="116" width="1" height="23" fill="#ff00ff"/>
<rect x="363" y="318" width="33" height="1" fill="#ff00ff"/>
<rect x="397" y="116" width="30" height="1" fill="#ff00ff"/>
<rect x="396" y="122" width="1" height="20" fill="#ff00ff"/>
<rect x="395" y="143" width="1" height="123" fill="#ff00ff"/>
<rect x="395" y="142" width="1" height="1" fill="#ff00ff"/>
<rect x="426" y="116" width="1" height="13" fill="#ff00ff"/>
<rect x="426" y="318" width="33" height="1" fill="#ff00ff"/>
<rect x="460" y="116" width="29" height="1" fill="#ff00ff"/>
<rect x="459" y="120" width="1" height="13" fill="#ff00ff"/>
<rect x="458" y="134" width="1" height="82" fill="#ff00ff"/>
<rect x="458" y="133" width="1" height="1" fill="#ff00ff"/>
<rect x="488" y="116" width="1" height="9" fill="#ff00ff"/>
<rect x="488" y="318" width="34" height="1" fill="#ff00ff"/>
<rect x="523" y="116" width="29" height="1" fill="#ff00ff"/>
<rect x="522" y="119" width="1" height="9" fill="#ff00ff"/>
<rect x="521" y="129" width="1" height="57" fill="#ff00ff"/>
<rect x="521" y="128" width="1" height="1" fill="#ff00ff"/>
<rect x="551" y="116" width="1" height="125" fill="#ff00ff"/>
<rect x="551" y="318" width="34" height="1" fill="#ff00ff"/>
<rect x="586" y="116" width="29" height="1" fill="#ff00ff"/>
<rect x="585" y="118" width="1" height="7" fill="#ff00ff"/>
<rect x="584" y="126" width="1" height="41" fill="#ff00ff"/>
<rect x="584" y="125" width="1" height="1" fill="#ff00ff"/>
<rect x="614" y="116" width="1" height="63" fill="#ff00ff"/>
<rect x="614" y="318" width="34" height="1" fill="#ff00ff"/>
<rect x="649" y="116" width="29" height="1" fill="#ff00ff"/>
<rect x="648" y="118" width="1" height="5" fill="#ff00ff"/>
<rect x="647" y="124" width="1" height="29" fill="#ff00ff"/>
<rect x="647" y="123" width="1" height="1" fill="#ff00ff"/>
<rect x="677" y="116" width="1" height="35" fill="#ff00ff"/>
<rect x="677" y="318" width="33" height="1" fill="#ff00ff"/>
<rect x="711" y="116" width="30" height="1" fill="#ff00ff"/>
<rect x="710" y="123" width="1" height="26" fill="#ff00ff"/>
<rect x="709" y="150" width="1" height="162" fill="#ff00ff"/>
<rect x="711" y="117" width="1" height="5" fill="#ff00ff"/>
<rect x="711" y="123" width="1" height="1" fill="#ff00ff"/>
<rect x="740" y="116" width="1" height="20" fill="#ff00ff"/>
<rect x="740" y="318" width="33" height="1" fill="#ff00ff"/>
<rect x="774" y="116" width="30" height="1" fill="#ff00ff"/>
<rect x="773" y="121" width="1" height="18" fill="#ff00ff"/>
<rect x="772" y="140" width="1" height="109" fill="#ff00ff"/>
<rect x="772" y="139" width="1" height="1" fill="#ff00ff"/>
<rect x="803" y="116" width="1" height="11" fill="#ff00ff"/>
<rect x="803" y="318" width="33" height="1" fill="#ff00ff"/>
<rect x="837" y="116" width="29" height="1" fill="#ff00ff"/>
<rect x="836" y="120" width="1" height="12" fill="#ff00ff"/>
<rect x="835" y="133" width="1" height="75" fill="#ff00ff"/>
<rect x="835" y="132" width="1" height="1" fill="#ff00ff"/>
<rect x="865" y="116" width="1" height="32" fill="#ff00ff"/>
<rect x="865" y="318" width="34" height="1" fill="#ff00ff"/>
<rect x="900" y="116" width="29" height="1" fill="#ff00ff"/>
<rect x="899" y="119" width="1" height="9" fill="#ff00ff"/>
<rect x="898" y="129" width="1" height="53" fill="#ff00ff"/>
<rect x="898" y="128" width="1" height="1" fill="#ff00ff"/>
<rect x="928" y="116" width="1" height="106" fill="#ff00ff"/>
<rect x="928" y="318" width="34" height="1" fill="#ff00ff"/>
<rect x="963" y="116" width="29" height="1" fill="#ff00ff"/>
<rect x="962" y="118" width="1" height="6" fill="#ff00ff"/>
<rect x="961" y="125" width="1" height="39" fill="#ff00ff"/>
<rect x="961" y="124" width="1" height="1" fill="#ff00ff"/>
<rect x="991" y="116" width="1" height="55" fill="#ff00ff"/>
<rect x="991" y="318" width="34" height="1" fill="#ff00ff"/>
<rect x="1026" y="116" width="29" height="1" fill="#ff00ff"/>
<rect x="1025" y="118" width="1" height="5" fill="#ff00ff"/>
<rect x="1024" y="124" width="1" height="27" fill="#ff00ff"/>
<rect x="1024" y="123" width="1" height="1" fill="#ff00ff"/>
<rect x="1054" y="116" width="1" height="30" fill="#ff00ff"/>
<rect x="1054" y="318" width="33" height="1" fill="#ff00ff"/>
<rect x="1088" y="116" width="30" height="1" fill="#ff00ff"/>
<rect x="1087" y="123" width="1" height="25" fill="#ff00ff"/>
<rect x="1086" y="149" width="1" height="152" fill="#ff00ff"/>
<rect x="1088" y="117" width="1" height="5" fill="#ff00ff"/>
<rect x="1088" y="123" width="1" height="1" fill="#ff00ff"/>
<rect x="1117" y="116" width="1" height="18" fill="#ff00ff"/>
<rect x="1117" y="318" width="33" height="1" fill="#ff00ff"/>
<rect x="1151" y="116" width="30" height="1" fill="#ff00ff"/>
<rect x="1150" y="121" width="1" height="16" fill="#ff00ff"/>
<rect x="1149" y="138" width="1" height="101" fill="#ff00ff"/>
<rect x="1149" y="137" width="1" height="1" fill="#ff00ff"/>
<rect x="1180" y="116" width="1" height="10" fill="#ff00ff"/>
<rect x="1180" y="318" width="33" height="1" fill="#ff00ff"/>
<rect x="1214" y="116" width="29" height="1" fill="#ff00ff"/>
<rect x="1213" y="119" width="1" height="11" fill="#ff00ff"/>
<rect x="1212" y="131" width="1" height="69" fill="#ff00ff"/>
<rect x="1212" y="130" width="1" height="1" fill="#ff00ff"/>
<rect x="1242" y="116" width="1" height="117" fill="#ff00ff"/>
<rect x="1242" y="318" width="34" height="1" fill="#ff00ff"/>
<rect x="1277" y="116" width="29" height="1" fill="#ff00ff"/>
<rect x="1276" y="119" width="1" height="8" fill="#ff00ff"/>
<rect x="1275" y="128" width="1" height="49" fill="#ff00ff"/>
<rect x="1275" y="127" width="1" height="1" fill="#ff00ff"/>
<rect x="1305" y="116" width="1" height="90" fill="#ff00ff"/>
<rect x="1305" y="318" width="34" height="1" fill="#ff00ff"/>
<rect x="1340" y="116" width="29" height="1" fill="#ff00ff"/>
<rect x="1339" y="118" width="1" height="6" fill="#ff00ff"/>
<rect x="1338" y="125" width="1" height="34" fill="#ff00ff"/>
<rect x="1338" y="124" width="1" height="1" fill="#ff00ff"/>
<rect x="1368" y="116" width="1" height="48" fill="#ff00ff"/>
<rect x="1368" y="318" width="16" height="1" fill="#ff00ff"/>
<rect x="206" y="116" width="1" height="202" fill="#ff0000"/>
<rect x="206" y="317" width="33" height="1" fill="#ff0000"/>
<rect x="238" y="118" width="1" height="71" fill="#ff0000"/>
<rect x="237" y="189" width="1" height="129" fill="#ff0000"/>
<rect x="239" y="116" width="31" height="1" fill="#ff0000"/>
<rect x="269" y="116" width="1" height="202" fill="#ff0000"/>
<rect x="269" y="317" width="33" height="1" fill="#ff0000"/>
<rect x="301" y="118" width="1" height="37" fill="#ff0000"/>
<rect x="300" y="155" width="1" height="163" fill="#ff0000"/>
<rect x="302" y="116" width="30" height="1" fill="#ff0000"/>
<rect x="331" y="116" width="1" height="202" fill="#ff0000"/>
<rect x="331" y="317" width="34" height="1" fill="#ff0000"/>
<rect x="364" y="118" width="1" height="21" fill="#ff0000"/>
<rect x="363" y="139" width="1" height="179" fill="#ff0000"/>
<rect x="365" y="116" width="30" height="1" fill="#ff0000"/>
<rect x="394" y="116" width="1" height="202" fill="#ff0000"/>
<rect x="394" y="317" width="34" height="1" fill="#ff0000"/>
<rect x="427" y="118" width="1" height="11" fill="#ff0000"/>
<rect x="426" y="129" width="1" height="189" fill="#ff0000"/>
<rect x="428" y="116" width="30" height="1" fill="#ff0000"/>
<rect x="457" y="116" width="1" height="202" fill="#ff0000"/>
<rect x="457" y="317" width="33" height="1" fill="#ff0000"/>
<rect x="489" y="118" width="1" height="200" fill="#ff0000"/>
<rect x="490" y="116" width="31" height="1" fill="#ff0000"/>
<rect x="520" y="116" width="1" height="202" fill="#ff0000"/>
<rect x="520" y="317" width="33" height="1" fill="#ff0000"/>
<rect x="552" y="118" width="1" height="123" fill="#ff0000"/>
<rect x="551" y="241" width="1" height="77" fill="#ff0000"/>
<rect x="553" y="116" width="31" height="1" fill="#ff0000"/>
<rect x="583" y="116" width="1" height="202" fill="#ff0000"/>
<rect x="583" y="317" width="33" height="1" fill="#ff0000"/>
<rect x="615" y="118" width="1" height="61" fill="#ff0000"/>
<rect x="614" y="179" width="1" height="139" fill="#ff0000"/>
<rect x="616" y="116" width="31" height="1" fill="#ff0000"/>
<rect x="646" y="116" width="1" height="202" fill="#ff0000"/>
<rect x="646" y="317" width="33" height="1" fill="#ff0000"/>
<rect x="678" y="118" width="1" height="33" fill="#ff0000"/>
<rect x="677" y="151" width="1" height="167" fill="#ff0000"/>
<rect x="679" y="116" width="30" height="1" fill="#ff0000"/>
<rect x="708" y="116" width="1" height="202" fill="#ff0000"/>
<rect x="708" y="317" width="34" height="1" fill="#ff0000"/>
<rect x="741" y="118" width="1" height="18" fill="#ff0000"/>
<rect x="740" y="136" width="1" height="182" fill="#ff0000"/>
<rect x="742" y="116" width="30" height="1" fill="#ff0000"/>
<rect x="771" y="116" width="1" height="202" fill="#ff0000"/>
<rect x="771" y="317" width="34" height="1" fill="#ff0000"/>
<rect x="804" y="118" width="1" height="9" fill="#ff0000"/>
<rect x="803" y="127" width="1" height="191" fill="#ff0000"/>
<rect x="805" y="116" width="30" height="1" fill="#ff0000"/>
<rect x="834" y="116" width="1" height="202" fill="#ff0000"/>
<rect x="834" y="317" width="33" height="1" fill="#ff0000"/>
<rect x="866" y="118" width="1" height="200" fill="#ff0000"/>
<rect x="867" y="116" width="31" height="1" fill="#ff0000"/>
<rect x="897" y="116" width="1" height="202" fill="#ff0000"/>
<rect x="897" y="317" width="33" height="1" fill="#ff0000"/>
<rect x="929" y="118" width="1" height="104" fill="#ff0000"/>
<rect x="928" y="222" width="1" height="96" fill="#ff0000"/>
<rect x="930" y="116" width="31" height="1" fill="#ff0000"/>
<rect x="960" y="116" width="1" height="202" fill="#ff0000"/>
<rect x="960" y="317" width="33" height="1" fill="#ff0000"/>
<rect x="992" y="118" width="1" height="53" fill="#ff0000"/>
<rect x="991" y="171" width="1" height="147" fill="#ff0000"/>
<rect x="993" y="116" width="31" height="1" fill="#ff0000"/>
<rect x="1023" y="116" width="1" height="202" fill="#ff0000"/>
<rect x="1023" y="317" width="33" height="1" fill="#ff0000"/>
<rect x="1055" y="118" width="1" height="28" fill="#ff0000"/>
<rect x="1054" y="146" width="1" height="172" fill="#ff0000"/>
<rect x="1056" y="116" width="30" height="1" fill="#ff0000"/>
<rect x="1085" y="116" width="1" height="202" fill="#ff0000"/>
<rect x="1085" y="317" width="34" height="1" fill="#ff0000"/>
<rect x="1118" y="118" width="1" height="16" fill="#ff0000"/>
<rect x="1117" y="134" width="1" height="184" fill="#ff0000"/>
<rect x="1119" y="116" width="30" height="1" fill="#ff0000"/>
<rect x="1148" y="116" width="1" height="202" fill="#ff0000"/>
<rect x="1148" y="317" width="34" height="1" fill="#ff0000"/>
<rect x="1181" y="118" width="1" height="8" fill="#ff0000"/>
<rect x="1180" y="126" width="1" height="192" fill="#ff0000"/>
<rect x="1182" y="116" width="30" height="1" fill="#ff0000"/>
<rect x="1211" y="116" width="1" height="202" fill="#ff0000"/>
<rect x="1211" y="317" width="33" height="1" fill="#ff0000"/>
<rect x="1243" y="118" width="1" height="200" fill="#ff0000"/>
<rect x="1244" y="116" width="31" height="1" fill="#ff0000"/>
<rect x="1274" y="116" width="1" height="202" fill="#ff0000"/>
<rect x="1274" y="317" width="33" height="1" fill="#ff0000"/>
<rect x="1306" y="118" width="1" height="88" fill="#ff0000"/>
<rect x="1305" y="206" width="1" height="112" fill="#ff0000"/>
<rect x="1307" y="116" width="31" height="1" fill="#ff0000"/>
<rect x="1337" y="116" width="1" height="202" fill="#ff0000"/>
<rect x="1337" y="317" width="33" height="1" fill="#ff0000"/>
<rect x="1369" y="118" width="1" height="46" fill="#ff0000"/>
<rect x="1368" y="164" width="1" height="154" fill="#ff0000"/>
<rect x="1370" y="116" width="14" height="1" fill="#ff0000"/>
<rect x="206" y="318" width="1" height="2" fill="#00ffff"/>
<rect x="206" y="534" width="314" height="1" fill="#00ff00"/>
<rect x="520" y="329" width="1" height="206" fill="#00ff00"/>
<rect x="520" y="329" width="864" height="1" fill="#00ff00"/>
<rect x="206" y="747" width="1178" height="1" fill="#555555"/>
<rect x="206" y="542" width="32" height="1" fill="#ffff00"/>
<rect x="238" y="747" width="377" height="1" fill="#ffff00"/>
<rect x="615" y="542" width="63" height="1" fill="#ffff00"/>
<rect x="678" y="747" width="377" height="1" fill="#ffff00"/>
<rect x="1055" y="542" width="62" height="1" fill="#ffff00"/>
<rect x="1117" y="747" width="64" height="1" fill="#ffff00"/>
<rect x="1181" y="542" width="62" height="1" fill="#ffff00"/>
<rect x="1243" y="747" width="63" height="1" fill="#ffff00"/>
<rect x="1306" y="542" width="63" height="1" fill="#ffff00"/>
<rect x="1369" y="747" width="15" height="1" fill="#ffff00"/>
<rect x="238" y="542" width="1" height="206" fill="#ffff00"/>
<rect x="615" y="542" width="1" height="206" fill="#ffff00"/>
<rect x="678" y="542" width="1" height="206" fill="#ffff00"/>
<rect x="1055" y="542" width="1" height="206" fill="#ffff00"/>
<rect x="1117" y="542" width="1" height="206" fill="#ffff00"/>
<rect x="1181" y="542" width="1" height="206" fill="#ffff00"/>
<rect x="1243" y="542" width="1" height="206" fill="#ffff00"/>
<rect x="1306" y="542" width="1" height="206" fill="#ffff00"/>
<rect x="1369" y="542" width="1" height="206" fill="#ffff00"/>
<rect x="615" y="542" width="2" height="4" fill="#000"/>
<rect x="616" y="543" width="1" height="3" fill="#ffff00"/>
<rect x="1055" y="542" width="2" height="2" fill="#000"/>
<rect x="1056" y="543" width="1" height="1" fill="#ffff00"/>
<rect x="1181" y="542" width="2" height="1" fill="#000"/>
<rect x="1181" y="542" width="1" height="1" fill="#000"/>
<rect x="1306" y="542" width="2" height="5" fill="#000"/>
<rect x="1307" y="543" width="1" height="4" fill="#ffff00"/>
<rect x="1181" y="653" width="1" height="94" fill="#000"/>
<rect x="1181" y="654" width="1" height="4" fill="#ffff00"/>
<rect x="1180" y="657" width="1" height="90" fill="#ffff00"/>
<rect x="207" y="754" width="1176" height="1" fill="#fff"/>
<rect x="207" y="963" width="1176" height="1" fill="#fff"/>
<rect x="207" y="754" width="1" height="210" fill="#fff"/>
<rect x="1382" y="754" width="1" height="210" fill="#fff"/>
<rect x="206" y="962" width="33" height="1" fill="#ffff00"/>
<rect x="238" y="797" width="1" height="166" fill="#ffff00"/>
<rect x="238" y="797" width="1146" height="1" fill="#ffff00"/>
<rect x="206" y="756" width="1" height="204" fill="#ff0000"/>
<rect x="206" y="959" width="31" height="1" fill="#ff0000"/>
<rect x="238" y="756" width="1" height="201" fill="#ff0000"/>
<rect x="237" y="957" width="1" height="2" fill="#ff0000"/>
<rect x="238" y="756" width="1146" height="1" fill="#ff0000"/>
</svg>
<svg style="left:1310px;top:0;filter:drop-shadow(0 1px 0.5px rgba(30,50,75,.7))" width="80" height="22" shape-rendering="crispEdges">
<g fill="#fff">
<rect x="12" y="9" width="2" height="7"/><rect x="11" y="9" width="4" height="1"/><rect x="10" y="10" width="6" height="1"/><rect x="9" y="11" width="8" height="1"/><rect x="9" y="12" width="2" height="1"/><rect x="15" y="12" width="2" height="1"/><rect x="12" y="8" width="2" height="1"/>
<rect x="28" y="14" width="6" height="2"/>
<rect x="45" y="8" width="9" height="2"/><rect x="45" y="8" width="1" height="9"/><rect x="53" y="8" width="1" height="9"/><rect x="45" y="16" width="9" height="1"/>
</g>
<g stroke="#fff" stroke-width="2.3" shape-rendering="auto" stroke-linecap="square"><line x1="63.3" y1="8.6" x2="70.7" y2="16"/><line x1="70.7" y1="8.6" x2="63.3" y2="16"/></g>
</svg>
<span class="t" style="left:65.20px;top:147.00px;font-size:14px;line-height:18px;font-weight:normal;color:#ff0000;transform:scaleX(0.9946);">0: cp1</span>
<span class="t" style="left:149.57px;top:147.00px;font-size:14px;line-height:18px;font-weight:normal;color:#fff;transform:scaleX(1.0024);">81.241</span>
<span class="t" style="left:63.39px;top:174.00px;font-size:14px;line-height:18px;font-weight:normal;color:#ff00ff;transform:scaleX(1.0147);">0: cclk</span>
<span class="t" style="left:149.57px;top:174.00px;font-size:14px;line-height:18px;font-weight:normal;color:#fff;transform:scaleX(1.0042);">5.0000</span>
<span class="t" style="left:63.58px;top:201.00px;font-size:14px;line-height:18px;font-weight:normal;color:#000;transform:scaleX(1.0413);">0: clk0</span>
<span class="t" style="left:149.57px;top:201.00px;font-size:14px;line-height:18px;font-weight:normal;color:#fff;transform:scaleX(1.0042);">5.0000</span>
<span class="t" style="left:68.30px;top:228.00px;font-size:14px;line-height:18px;font-weight:normal;color:#6678ff;transform:scaleX(1.0008);">0: rw</span>
<span class="t" style="left:149.70px;top:228.00px;font-size:14px;line-height:18px;font-weight:normal;color:#fff;transform:scaleX(1.0012);">3.9998</span>
<span class="t" style="left:66.30px;top:255.00px;font-size:14px;line-height:18px;font-weight:normal;color:#00ff00;transform:scaleX(1.0029);">0: res</span>
<span class="t" style="left:149.57px;top:255.00px;font-size:14px;line-height:18px;font-weight:normal;color:#fff;transform:scaleX(1.0042);">5.0000</span>
<span class="t" style="left:61.08px;top:282.00px;font-size:14px;line-height:18px;font-weight:normal;color:#000;transform:scaleX(1.0322);">0: sync</span>
<span class="t" style="left:149.70px;top:282.00px;font-size:14px;line-height:18px;font-weight:normal;color:#fff;transform:scaleX(1.0012);">3.9996</span>
<span class="t" style="left:154.06px;top:112.00px;font-size:14px;line-height:18px;font-weight:normal;color:#000;transform:scaleX(1.0258);">5.0000</span>
<span class="t" style="left:145.76px;top:306.00px;font-size:14px;line-height:18px;font-weight:normal;color:#000;transform:scaleX(1.0177);">-28.665n</span>
<span class="t" style="left:66.30px;top:495.00px;font-size:14px;line-height:18px;font-weight:normal;color:#00ff00;transform:scaleX(1.0029);">0: res</span>
<span class="t" style="left:149.57px;top:495.00px;font-size:14px;line-height:18px;font-weight:normal;color:#fff;transform:scaleX(1.0042);">5.0000</span>
<span class="t" style="left:154.06px;top:325.00px;font-size:14px;line-height:18px;font-weight:normal;color:#000;transform:scaleX(1.0258);">5.0000</span>
<span class="t" style="left:170.50px;top:519.00px;font-size:14px;line-height:18px;font-weight:normal;color:#000;transform:scaleX(1.0057);">0.00</span>
<span class="t" style="left:61.08px;top:709.00px;font-size:14px;line-height:18px;font-weight:normal;color:#ffff00;transform:scaleX(1.0322);">0: sync</span>
<span class="t" style="left:149.70px;top:709.00px;font-size:14px;line-height:18px;font-weight:normal;color:#fff;transform:scaleX(1.0012);">3.9996</span>
<span class="t" style="left:154.19px;top:538.00px;font-size:14px;line-height:18px;font-weight:normal;color:#000;transform:scaleX(1.0228);">3.9998</span>
<span class="t" style="left:145.76px;top:733.00px;font-size:14px;line-height:18px;font-weight:normal;color:#000;transform:scaleX(1.0177);">-28.665n</span>
<span class="t" style="left:68.30px;top:896.00px;font-size:14px;line-height:18px;font-weight:normal;color:#ffff00;transform:scaleX(1.0008);">0: rw</span>
<span class="t" style="left:149.70px;top:896.00px;font-size:14px;line-height:18px;font-weight:normal;color:#fff;transform:scaleX(1.0012);">3.9998</span>
<span class="t" style="left:34.28px;top:923.00px;font-size:14px;line-height:18px;font-weight:normal;color:#ff0000;transform:scaleX(1.0490);">0: rnwstretched</span>
<span class="t" style="left:149.57px;top:923.00px;font-size:14px;line-height:18px;font-weight:normal;color:#fff;transform:scaleX(1.0042);">5.0000</span>
<span class="t" style="left:154.06px;top:752.00px;font-size:14px;line-height:18px;font-weight:normal;color:#000;transform:scaleX(1.0258);">5.0000</span>
<span class="t" style="left:170.50px;top:947.00px;font-size:14px;line-height:18px;font-weight:normal;color:#000;transform:scaleX(1.0057);">0.00</span>
<span class="t" style="left:212.80px;top:967.00px;font-size:14px;line-height:18px;font-weight:normal;color:#000;transform:scaleX(0.9905);">0.00</span>
<span class="t" style="left:1334.65px;top:967.00px;font-size:14px;line-height:18px;font-weight:normal;color:#000;transform:scaleX(1.0066);">75.000u</span>
<span class="t" style="left:645.43px;top:5.00px;font-size:12.5px;line-height:16px;font-weight:bold;color:#fff;transform:scaleX(1.1329);text-shadow:1px 1px 1px rgba(20,30,50,.8);">gwave</span>
<span class="t" style="left:11.10px;top:26.00px;font-size:14px;line-height:18px;font-weight:normal;color:#000;transform:scaleX(0.9772);">File</span>
<span class="t" style="left:46.87px;top:26.00px;font-size:14px;line-height:18px;font-weight:normal;color:#000;transform:scaleX(1.0333);">View</span>
<span class="t" style="left:93.16px;top:26.00px;font-size:14px;line-height:18px;font-weight:normal;color:#000;transform:scaleX(1.0186);">Options</span>
<span class="t" style="left:20.87px;top:58.00px;font-size:14px;line-height:18px;font-weight:normal;color:#000;transform:scaleX(1.0580);">Zoom In</span>
<span class="t" style="left:106.18px;top:58.00px;font-size:14px;line-height:18px;font-weight:normal;color:#000;transform:scaleX(1.0369);">Zoom Out</span>
<span class="t" style="left:206.71px;top:58.00px;font-size:14px;line-height:18px;font-weight:normal;color:#000;transform:scaleX(1.0606);">Delete</span>
<span class="t" style="left:285.75px;top:58.00px;font-size:14px;line-height:18px;font-weight:normal;color:#000;transform:scaleX(1.0251);">Reload All</span>
<span class="t" style="left:1329.26px;top:86.00px;font-size:14px;line-height:18px;font-weight:normal;color:#fff;transform:scaleX(1.0245);">89.853u</span>
</body></html>
